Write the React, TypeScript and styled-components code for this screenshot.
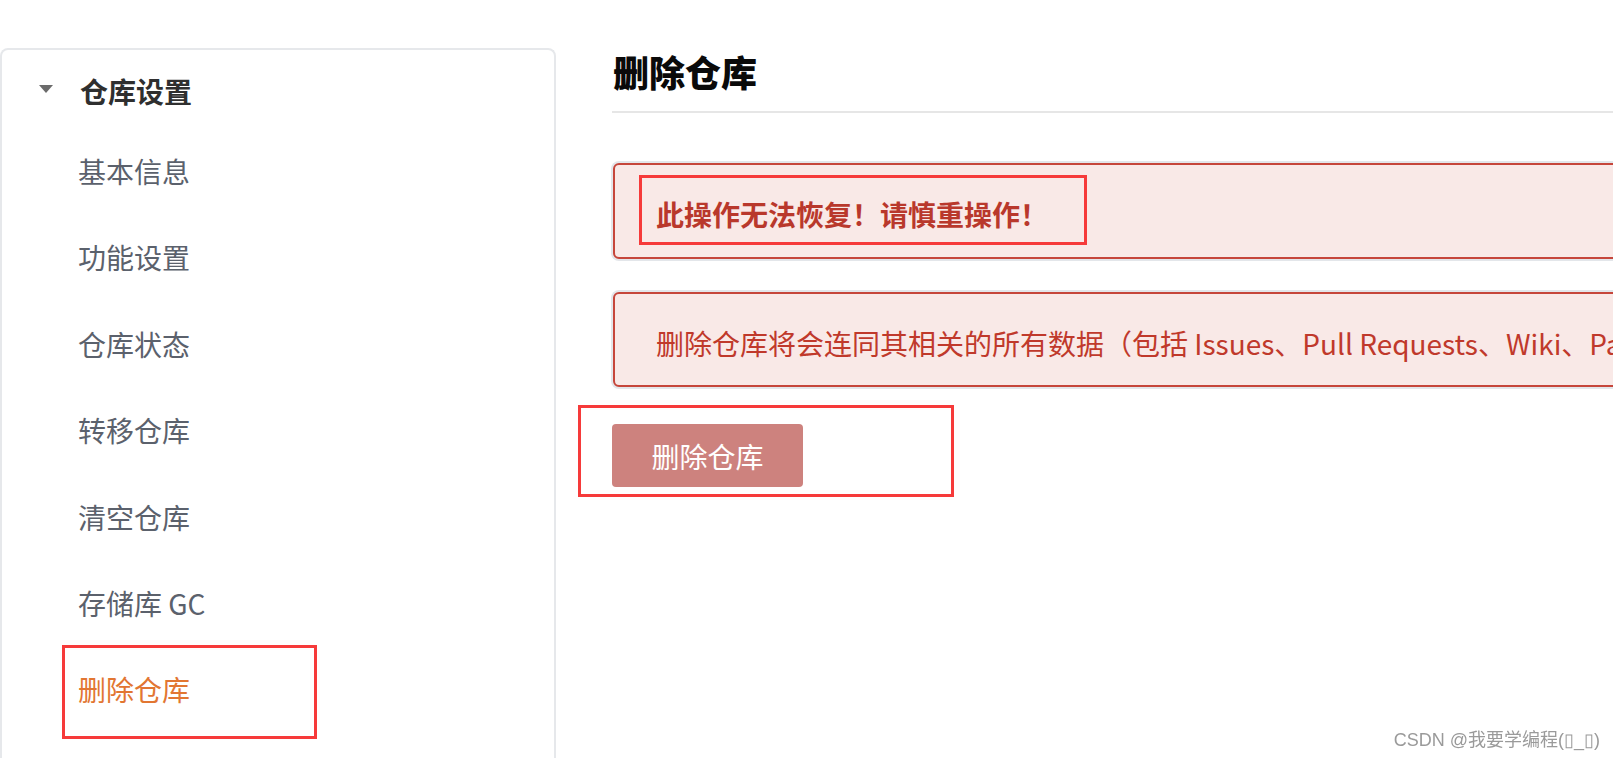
import React from 'react';
import styled, { createGlobalStyle } from 'styled-components';

const GlobalStyle = createGlobalStyle`
  html, body {
    margin: 0;
    padding: 0;
    background: #ffffff;
    overflow: hidden;
  }
  body {
    font-family: "Noto Sans CJK SC", "Noto Sans", sans-serif;
  }
`;

const menuItems = ['基本信息', '功能设置', '仓库状态', '转移仓库', '清空仓库', '存储库 GC', '删除仓库'];
const activeItem = '删除仓库';

// Red marker boxes drawn over the screenshot
interface MarkProps {
  $top: number;
  $left: number;
  $width: number;
  $height: number;
}

const Marked = styled.div<MarkProps>`
  position: relative;

  &::after {
    content: '';
    position: absolute;
    top: ${p => p.$top}px;
    left: ${p => p.$left}px;
    width: ${p => p.$width}px;
    height: ${p => p.$height}px;
    border: 3px solid #f63a3a;
    box-sizing: border-box;
    pointer-events: none;
  }
`;

export default function App() {
  return (
    <>
      <GlobalStyle />
      <Page>
        <Sidebar>
          <GroupHeader>
            <Caret />
            仓库设置
          </GroupHeader>
          <MenuList>
            {menuItems.map(item =>
              item === activeItem ? (
                <Marked key={item} $top={-1} $left={60} $width={255} $height={94}>
                  <MenuItem $active>{item}</MenuItem>
                </Marked>
              ) : (
                <MenuItem key={item}>{item}</MenuItem>
              )
            )}
          </MenuList>
        </Sidebar>

        <Main>
          <Title>删除仓库</Title>
          <Alert $strong>
            <Marked $top={-19} $left={-17} $width={448} $height={70}>
              <AlertText $strong>此操作无法恢复！请慎重操作！</AlertText>
            </Marked>
          </Alert>
          <Alert>
            <AlertText>
              删除仓库将会连同其相关的所有数据（包括 Issues、Pull Requests、Wiki、Pages 等）一起删除，且不可恢复，请谨慎操作。
            </AlertText>
          </Alert>
          <Marked $top={-19} $left={-34} $width={376} $height={92}>
            <DangerButton>删除仓库</DangerButton>
          </Marked>
        </Main>
      </Page>
      <Watermark>CSDN @我要学编程(▯_▯)</Watermark>
    </>
  );
}

const Page = styled.div`
  display: flex;
  align-items: flex-start;
  width: 100%;
  height: 758px;
  overflow: hidden;
`;

const Sidebar = styled.aside`
  flex: 0 0 556px;
  box-sizing: border-box;
  margin-top: 48px;
  height: 760px;
  border: 2px solid #e6e8eb;
  border-bottom: none;
  border-radius: 8px 8px 0 0;
  background: #ffffff;
`;

const GroupHeader = styled.div`
  display: flex;
  align-items: center;
  padding: 23px 0 19px 37px;
  line-height: 36px;
  font-size: 28px;
  font-weight: 700;
  color: #2f2f2f;
`;

const Caret = styled.span`
  width: 0;
  height: 0;
  margin: -4px 27px 0 0;
  border-left: 7px solid transparent;
  border-right: 7px solid transparent;
  border-top: 8px solid #6b6b6b;
`;

const MenuList = styled.div`
  display: flex;
  flex-direction: column;
`;

const MenuItem = styled.div<{ $active?: boolean }>`
  height: 86.4px;
  line-height: 86.4px;
  padding-left: 76px;
  font-size: 28px;
  color: ${p => (p.$active ? '#e27632' : '#5b616c')};
`;

const Main = styled.main`
  flex: 1;
  min-width: 0;
  margin-left: 56px;
  margin-right: -40px;
  padding-top: 49px;
`;

const Title = styled.h1`
  margin: 0 0 50px;
  padding: 0 0 18px 1px;
  line-height: 44px;
  font-size: 36px;
  font-weight: 900;
  color: #0a0a0a;
  border-bottom: 2px solid #e6e6e6;
`;

const Alert = styled.div<{ $strong?: boolean }>`
  box-sizing: border-box;
  height: ${p => (p.$strong ? 96 : 95)}px;
  margin: 0 0 ${p => (p.$strong ? 33 : 37)}px 1px;
  padding: 29px 0 0 41px;
  background: #f9e9e7;
  border: 2px solid #c6463b;
  border-radius: 6px;
  box-shadow: 0 0 0 2px #e3e6ea;
  overflow: hidden;
`;

const AlertText = styled.div<{ $strong?: boolean }>`
  line-height: 40px;
  font-size: 28px;
  font-weight: ${p => (p.$strong ? 700 : 400)};
  color: ${p => (p.$strong ? '#b9382c' : '#c0392b')};
  white-space: nowrap;
`;

const DangerButton = styled.button`
  display: block;
  width: 191px;
  height: 63px;
  margin: 0;
  border: none;
  border-radius: 4px;
  background: #cd827e;
  color: #ffffff;
  font-family: "Noto Sans CJK SC", "Noto Sans", sans-serif;
  font-size: 28px;
  cursor: pointer;
`;

const Watermark = styled.div`
  position: fixed;
  right: 13px;
  bottom: 7px;
  font-family: "Liberation Sans", "Noto Sans CJK SC", sans-serif;
  font-size: 18px;
  color: #9a9a9a;
  text-shadow: 0 0 2px #ffffff;
`;
